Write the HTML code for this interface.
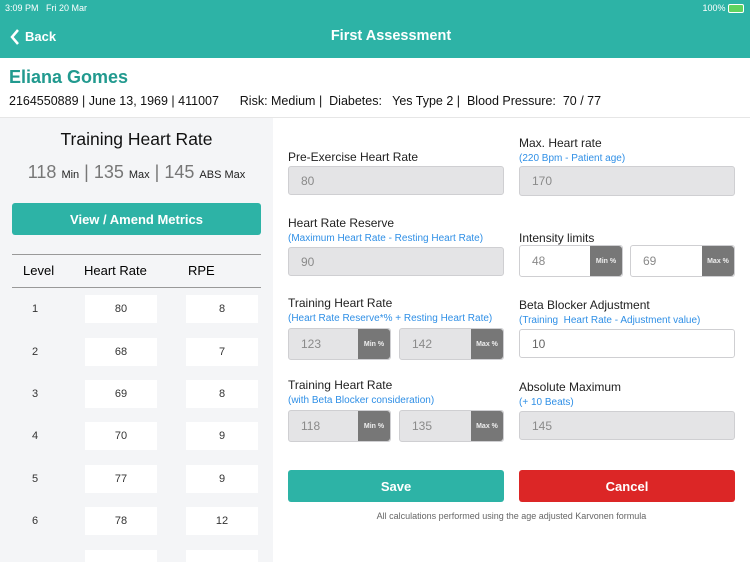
<html><head><style>
body{margin:0;width:750px;height:562px;overflow:hidden;font-family:"Liberation Sans",sans-serif;background:#fff;position:relative}
.a{position:absolute}
.t{color:#222;font-size:12px}
.s{color:#2f8fe6;font-size:10px}
.in{position:absolute;background:#e4e4e6;border:1px solid #cfcfd2;border-radius:3px;box-sizing:border-box;color:#8a8a8a;font-size:12px;padding-left:12px;display:flex;align-items:center}
.tag{position:absolute;right:0;top:0;bottom:0;width:32px;background:#777;color:#eee;font-size:7px;font-weight:bold;display:flex;align-items:center;justify-content:center;border-radius:0 3px 3px 0}
.cell{position:absolute;background:#fff;width:72px;height:28px;font-size:11px;color:#333;display:flex;align-items:center;justify-content:center}
.lv{position:absolute;left:32px;font-size:11px;color:#333}
</style></head><body>
<div class="a" style="left:0;top:0;width:750px;height:58px;background:#2db3a6"></div>
<div class="a" style="left:5px;top:3px;color:#fff;font-size:9px">3:09 PM&nbsp;&nbsp; Fri 20 Mar</div>
<div class="a" style="right:6px;top:3px;color:#fff;font-size:9px">100% <span style="display:inline-block;width:14px;height:7px;border:1px solid #fff;border-radius:2px;vertical-align:middle;background:#5fd35f"></span></div>
<svg class="a" style="left:9px;top:28px" width="12" height="18"><path d="M9 2 L3 9 L9 16" stroke="#fff" stroke-width="2.5" fill="none"/></svg>
<div class="a" style="left:25px;top:29px;color:#fff;font-size:13px;font-weight:bold">Back</div>
<div class="a" style="left:0;width:782px;text-align:center;top:28px;color:#fff;font-size:14.5px;font-weight:bold">First Assessment</div>
<div class="a" style="left:9px;top:67px;color:#229a8f;font-size:18px;font-weight:bold">Eliana Gomes</div>
<div class="a" style="left:9px;top:94px;color:#111;font-size:12.5px;white-space:pre">2164550889 | June 13, 1969 | 411007      Risk: Medium |  Diabetes:   Yes Type 2 |  Blood Pressure:  70 / 77</div>
<div class="a" style="left:0;top:117px;width:273px;height:445px;background:#f4f5f7"></div>
<div class="a" style="left:0;top:117px;width:750px;height:1px;background:#e6e6e6"></div>
<div class="a" style="left:0;top:129px;width:273px;text-align:center;font-size:17.5px;color:#111">Training Heart Rate</div>
<div class="a" style="left:0;top:162px;width:273px;text-align:center;color:#777;font-size:18px">118 <span style="font-size:11px;color:#222">Min</span> | 135 <span style="font-size:11px;color:#222">Max</span> | 145 <span style="font-size:11px;color:#222">ABS Max</span></div>
<div class="a" style="left:12px;top:203px;width:249px;height:32px;background:#2db3a6;border-radius:3px;color:#fff;font-size:13px;font-weight:bold;display:flex;align-items:center;justify-content:center">View / Amend Metrics</div>
<div class="a" style="left:12px;top:254px;width:249px;height:1px;background:#999"></div>
<div class="a" style="left:12px;top:287px;width:249px;height:1px;background:#999"></div>
<div class="a" style="left:23px;top:263px;font-size:13px;color:#000">Level</div>
<div class="a" style="left:84px;top:263px;font-size:13px;color:#000">Heart Rate</div>
<div class="a" style="left:188px;top:263px;font-size:13px;color:#000">RPE</div>
<div class="lv" style="top:303px">1</div><div class="cell" style="left:85px;top:295px">80</div><div class="cell" style="left:186px;top:295px">8</div>
<div class="lv" style="top:346px">2</div><div class="cell" style="left:85px;top:338px">68</div><div class="cell" style="left:186px;top:338px">7</div>
<div class="lv" style="top:388px">3</div><div class="cell" style="left:85px;top:380px">69</div><div class="cell" style="left:186px;top:380px">8</div>
<div class="lv" style="top:430px">4</div><div class="cell" style="left:85px;top:422px">70</div><div class="cell" style="left:186px;top:422px">9</div>
<div class="lv" style="top:473px">5</div><div class="cell" style="left:85px;top:465px">77</div><div class="cell" style="left:186px;top:465px">9</div>
<div class="lv" style="top:515px">6</div><div class="cell" style="left:85px;top:507px">78</div><div class="cell" style="left:186px;top:507px">12</div>
<div class="cell" style="left:85px;top:550px"></div><div class="cell" style="left:186px;top:550px"></div>

<div class="a t" style="left:288px;top:150px">Pre-Exercise Heart Rate</div>
<div class="in" style="left:288px;top:166px;width:216px;height:29px">80</div>
<div class="a t" style="left:519px;top:136px">Max. Heart rate</div>
<div class="a s" style="left:519px;top:153px">(220 Bpm - Patient age)</div>
<div class="in" style="left:519px;top:166px;width:216px;height:30px">170</div>

<div class="a t" style="left:288px;top:216px">Heart Rate Reserve</div>
<div class="a s" style="left:288px;top:233px">(Maximum Heart Rate - Resting Heart Rate)</div>
<div class="in" style="left:288px;top:247px;width:216px;height:29px">90</div>
<div class="a t" style="left:519px;top:231px">Intensity limits</div>
<div class="in" style="left:519px;top:245px;width:104px;height:32px;background:#fff">48<div class="tag">Min %</div></div>
<div class="in" style="left:630px;top:245px;width:105px;height:32px;background:#fff">69<div class="tag">Max %</div></div>

<div class="a t" style="left:288px;top:296px">Training Heart Rate</div>
<div class="a s" style="left:288px;top:313px">(Heart Rate Reserve*% + Resting Heart Rate)</div>
<div class="in" style="left:288px;top:328px;width:103px;height:32px">123<div class="tag">Min %</div></div>
<div class="in" style="left:399px;top:328px;width:105px;height:32px">142<div class="tag">Max %</div></div>
<div class="a t" style="left:519px;top:298px">Beta Blocker Adjustment</div>
<div class="a s" style="left:519px;top:315px">(Training&nbsp; Heart Rate - Adjustment value)</div>
<div class="in" style="left:519px;top:329px;width:216px;height:29px;background:#fff;color:#666">10</div>

<div class="a t" style="left:288px;top:378px">Training Heart Rate</div>
<div class="a s" style="left:288px;top:395px">(with Beta Blocker consideration)</div>
<div class="in" style="left:288px;top:410px;width:103px;height:32px">118<div class="tag">Min %</div></div>
<div class="in" style="left:399px;top:410px;width:105px;height:32px">135<div class="tag">Max %</div></div>
<div class="a t" style="left:519px;top:380px">Absolute Maximum</div>
<div class="a s" style="left:519px;top:397px">(+ 10 Beats)</div>
<div class="in" style="left:519px;top:411px;width:216px;height:29px">145</div>

<div class="a" style="left:288px;top:470px;width:216px;height:32px;background:#2db3a6;border-radius:3px;color:#fff;font-size:13px;font-weight:bold;display:flex;align-items:center;justify-content:center">Save</div>
<div class="a" style="left:519px;top:470px;width:216px;height:32px;background:#dc2626;border-radius:3px;color:#fff;font-size:13px;font-weight:bold;display:flex;align-items:center;justify-content:center">Cancel</div>
<div class="a" style="left:288px;width:447px;top:511px;text-align:center;font-size:9px;color:#666">All calculations performed using the age adjusted Karvonen formula</div>
</body></html>
